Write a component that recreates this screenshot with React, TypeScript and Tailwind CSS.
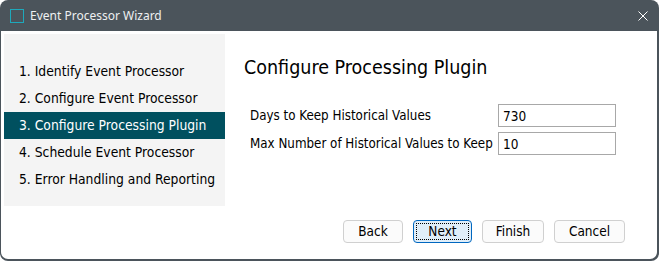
import React from 'react';

const steps = [
  '1. Identify Event Processor',
  '2. Configure Event Processor',
  '3. Configure Processing Plugin',
  '4. Schedule Event Processor',
  '5. Error Handling and Reporting',
];

const font = { fontFamily: '"DejaVu Sans Condensed", "DejaVu Sans", sans-serif' };

const WizardButton: React.FC<{ label: string; width: string; focused?: boolean }> = ({ label, width, focused }) => {
  if (focused) {
    return (
      <button className={`${width} h-[23px] rounded-[4px] border border-[#0067c0] bg-[#e0eef9] p-[2px] text-[13.5px] text-black`}>
        <span className="flex h-full w-full items-center justify-center border border-dotted border-black">{label}</span>
      </button>
    );
  }
  return (
    <button className={`${width} h-[23px] rounded-[4px] border border-[#d0d0d0] bg-[#fbfbfb] text-[13.5px] text-black`}>
      {label}
    </button>
  );
};

export default function App() {
  return (
    <div className="flex h-[261px] w-[659px] flex-col overflow-hidden rounded-[8px] bg-[#4b545b]" style={font}>
      {/* title bar */}
      <div className="flex h-[31px] shrink-0 items-center pl-[10px] pr-[11px]">
        <div className="h-[14px] w-[14px] border-[1.5px] border-[#1ea9bc]" />
        <span className="ml-[6px] text-[12px] text-[#eef0f1]" style={{ fontFamily: '"Noto Sans", "Open Sans", sans-serif' }}>
          Event Processor Wizard
        </span>
        <svg className="ml-auto" width="10" height="10" viewBox="0 0 10 10">
          <path d="M0.5 0.5 L9.5 9.5 M9.5 0.5 L0.5 9.5" stroke="#ffffff" strokeWidth="1" />
        </svg>
      </div>

      {/* body */}
      <div className="mb-[2px] ml-[1px] mr-[2px] flex flex-1 flex-col rounded-b-[7px] bg-white pl-[3px] pt-[3px]">
        <div className="flex">
          <div className="h-[172px] w-[221px] bg-[#f4f4f4] pt-[24px]">
            {steps.map((s, i) => (
              <div
                key={s}
                className={`flex h-[27px] items-center pl-[15px] text-[13.75px] ${i === 2 ? 'bg-[#00505f] text-white' : 'text-black'}`}
              >
                {s}
              </div>
            ))}
          </div>

          <div className="pl-[19px] pt-[22px]">
            <h1 className="text-[19.5px] leading-[24px] text-black">Configure Processing Plugin</h1>
            <div className="mt-[24px] flex flex-col gap-[5px] pl-[6px]">
              <div className="flex items-center">
                <span className="w-[248px] text-[13.25px] text-black">Days to Keep Historical Values</span>
                <input
                  defaultValue="730"
                  className="h-[23px] w-[118px] border border-[#a8a8a8] px-[4px] text-[13.5px] text-black outline-none"
                />
              </div>
              <div className="flex items-center">
                <span className="w-[248px] text-[13.25px] text-black">Max Number of Historical Values to Keep</span>
                <input
                  defaultValue="10"
                  className="h-[23px] w-[118px] border border-[#a8a8a8] px-[4px] text-[13.5px] text-black outline-none"
                />
              </div>
            </div>
          </div>
        </div>

        <div className="mt-[14px] flex justify-end gap-[10px] pr-[32px]">
          <WizardButton label="Back" width="w-[60px]" />
          <WizardButton label="Next" width="w-[59px]" focused />
          <WizardButton label="Finish" width="w-[62px]" />
          <WizardButton label="Cancel" width="w-[71px]" />
        </div>
      </div>
    </div>
  );
}
